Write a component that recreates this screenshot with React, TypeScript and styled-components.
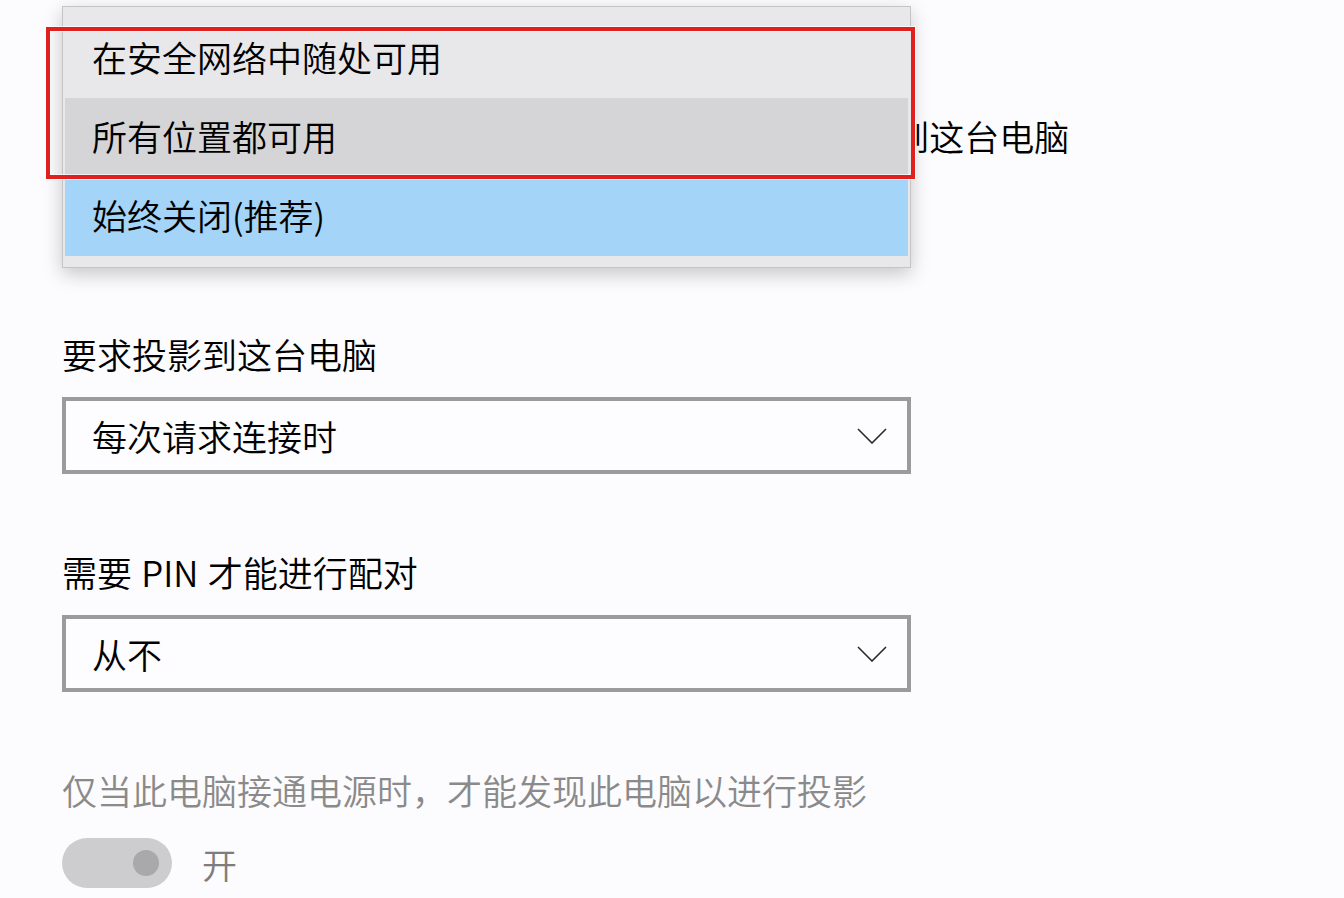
import React from "react";
import styled, { createGlobalStyle } from "styled-components";

const GlobalStyle = createGlobalStyle`
  html, body {
    margin: 0;
    padding: 0;
    background: #fcfbfd;
  }
  body {
    font-family: "Noto Sans CJK SC", "Noto Sans", sans-serif;
    font-weight: 350;
    color: #000;
    overflow: hidden;
  }
`;

const Page = styled.div`
  position: relative;
  width: 1344px;
  height: 898px;
  box-sizing: border-box;
  padding: 116px 0 0 62px;
  display: flex;
  flex-direction: column;
  background: #fcfbfd;
`;

const Section = styled.section<{ $first?: boolean }>`
  display: flex;
  flex-direction: column;
  gap: 19px;
  margin-top: ${(p) => (p.$first ? "0" : "78px")};
`;

const Label = styled.div<{ $muted?: boolean; $wordSpacing?: number }>`
  font-size: 35px;
  line-height: 40px;
  height: 44px;
  white-space: nowrap;
  word-spacing: ${(p) => p.$wordSpacing ?? 1.5}px;
  color: ${(p) => (p.$muted ? "#8a8a8a" : "#000")};
`;

const Combo = styled.div`
  width: 849px;
  height: 77px;
  box-sizing: border-box;
  border: 4px solid #9b9b9b;
  background: #fdfcfe;
  display: flex;
  align-items: center;
  justify-content: space-between;
  padding: 0 20px 0 26px;
`;

const ComboText = styled.span`
  font-size: 35px;
  line-height: 44px;
`;

const Chevron = styled.svg`
  width: 30px;
  height: 16px;
  flex: none;
`;

const ToggleRow = styled.div`
  display: flex;
  align-items: center;
  gap: 30px;
  margin-top: 24px;
`;

const Track = styled.div`
  width: 110px;
  height: 50px;
  border-radius: 25px;
  background: #cdcccf;
  display: flex;
  align-items: center;
  justify-content: flex-end;
  padding-right: 13px;
  box-sizing: border-box;
`;

const Knob = styled.div`
  width: 26px;
  height: 26px;
  border-radius: 50%;
  background: #a9a8aa;
`;

const ToggleText = styled.span`
  font-size: 35px;
  line-height: 44px;
  color: #7d7d7d;
  margin-top: 2px;
`;

const Popup = styled.ul`
  position: absolute;
  left: 62px;
  top: 6px;
  width: 849px;
  box-sizing: border-box;
  margin: 0;
  padding: 12px 0 11px;
  list-style: none;
  background: #e8e7e9;
  border: 1px solid #c4c3c5;
  box-shadow: 0 6px 18px rgba(0, 0, 0, 0.22);
`;

const Item = styled.li<{ $state?: "hover" | "selected" }>`
  height: 79px;
  box-sizing: border-box;
  margin: 0 2px;
  display: flex;
  align-items: center;
  padding: 0 0 5px 27px;
  font-size: 35px;
  color: #000;
  background: ${(p) =>
    p.$state === "hover" ? "#d5d4d6" : p.$state === "selected" ? "#a4d4f8" : "transparent"};
`;

const Highlight = styled.div`
  position: absolute;
  left: 46px;
  top: 27px;
  width: 869px;
  height: 152px;
  box-sizing: border-box;
  border: 4px solid #e0201e;
  box-shadow: 0 0 0 1px rgba(255, 255, 255, 0.7), inset 0 0 0 1px rgba(255, 255, 255, 0.6);
  pointer-events: none;
`;

const ChevronIcon = () => (
  <Chevron viewBox="0 0 30 16">
    <polyline points="1,1 15,15 29,1" fill="none" stroke="#2b2b2b" strokeWidth="1.6" />
  </Chevron>
);

export default function App() {
  return (
    <>
      <GlobalStyle />
      <Page>
        <Section $first>
          <Label $wordSpacing={0}>当你同意时，部分 Windows 和 Android 设备可以投影到这台电脑</Label>
          <Combo>
            <ComboText>始终关闭(推荐)</ComboText>
            <ChevronIcon />
          </Combo>
        </Section>
        <Section>
          <Label>要求投影到这台电脑</Label>
          <Combo>
            <ComboText>每次请求连接时</ComboText>
            <ChevronIcon />
          </Combo>
        </Section>
        <Section>
          <Label>需要 PIN 才能进行配对</Label>
          <Combo>
            <ComboText>从不</ComboText>
            <ChevronIcon />
          </Combo>
        </Section>
        <Section>
          <Label $muted>仅当此电脑接通电源时，才能发现此电脑以进行投影</Label>
        </Section>
        <ToggleRow>
          <Track>
            <Knob />
          </Track>
          <ToggleText>开</ToggleText>
        </ToggleRow>

        <Popup>
          <Item>在安全网络中随处可用</Item>
          <Item $state="hover">所有位置都可用</Item>
          <Item $state="selected">始终关闭(推荐)</Item>
        </Popup>
        <Highlight />
      </Page>
    </>
  );
}
